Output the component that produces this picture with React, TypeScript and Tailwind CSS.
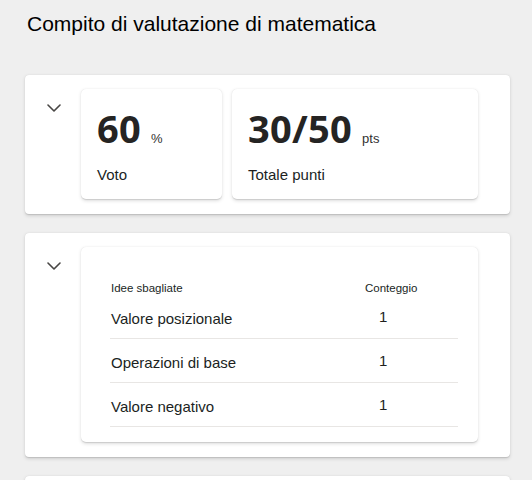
import React from 'react'

const misconceptions = [
  { name: 'Valore posizionale', count: 1 },
  { name: 'Operazioni di base', count: 1 },
  { name: 'Valore negativo', count: 1 },
]

function Chevron() {
  return (
    <svg width="14" height="8" viewBox="0 0 14 8" fill="none">
      <path d="M1 1l6 6 6-6" stroke="#484644" strokeWidth="1.6" strokeLinecap="round" strokeLinejoin="round" />
    </svg>
  )
}

function Section({ children }: { children: React.ReactNode }) {
  return (
    <div className="flex items-start rounded-[4px] bg-white pt-[14px] pb-[15px] pr-[32px] shadow-[0_1.6px_3.6px_rgba(0,0,0,0.13),0_0.3px_0.9px_rgba(0,0,0,0.11)]">
      {/* collapse toggle */}
      <div className="w-[56px] shrink-0 pl-[22px] pt-[15px]">
        <Chevron />
      </div>
      {children}
    </div>
  )
}

function StatCard({ value, unit, label, width }: { value: string; unit: string; label: string; width: string }) {
  return (
    <div
      className={`${width} rounded-[5px] bg-white pl-[16px] pt-[20px] pb-[14px] shadow-[0_1.6px_3.6px_rgba(0,0,0,0.13),0_0.3px_0.9px_rgba(0,0,0,0.11)]`}
    >
      <div className="flex items-baseline">
        <span className="font-['Open_Sans',sans-serif] text-[38px] leading-[38px] font-bold tracking-[0.3px] text-[#252423]">{value}</span>
        <span className="ml-[10px] text-[13px] text-[#323130]">{unit}</span>
      </div>
      <div className="mt-[16px] text-[15px] leading-[20px] text-[#201f1e]">{label}</div>
    </div>
  )
}

export default function App() {
  return (
    <div className="min-h-[480px] bg-[#efefef] px-[25px] pr-[22px] font-['Liberation_Sans',Arial,sans-serif]">
      <h1 className="pl-[2px] pt-[10px] text-[21px] leading-[28px] text-black">Compito di valutazione di matematica</h1>

      <div className="mt-[37px] flex flex-col gap-[19px]">
        {/* score summary */}
        <Section>
          <div className="flex gap-[10px]">
            <StatCard value="60" unit="%" label="Voto" width="w-[141px]" />
            <StatCard value="30/50" unit="pts" label="Totale punti" width="w-[246px]" />
          </div>
        </Section>

        {/* misconceptions table */}
        <Section>
          <div className="w-[397px] rounded-[5px] bg-white pl-[29px] pr-[20px] pt-[34px] pb-[15px] shadow-[0_1.6px_3.6px_rgba(0,0,0,0.13),0_0.3px_0.9px_rgba(0,0,0,0.11)]">
            <div className="flex h-[14px] items-center text-[11.5px] leading-[14px] text-[#201f1e]">
              <span className="w-[255px] pl-[1px]">Idee sbagliate</span>
              <span>Conteggio</span>
            </div>
            {misconceptions.map((m) => (
              <div key={m.name} className="flex h-[44px] items-end border-b border-[#e8e6e4] pb-[9px] text-[15px] leading-[20px] text-[#201f1e]">
                <span className="w-[255px] pl-[1px]">{m.name}</span>
                <span className="-translate-y-[2px] pl-[14px]">{m.count}</span>
              </div>
            ))}
          </div>
        </Section>

        <div className="h-[20px] rounded-t-[4px] bg-white shadow-[0_1.6px_3.6px_rgba(0,0,0,0.13),0_0.3px_0.9px_rgba(0,0,0,0.11)]" />
      </div>
    </div>
  )
}
